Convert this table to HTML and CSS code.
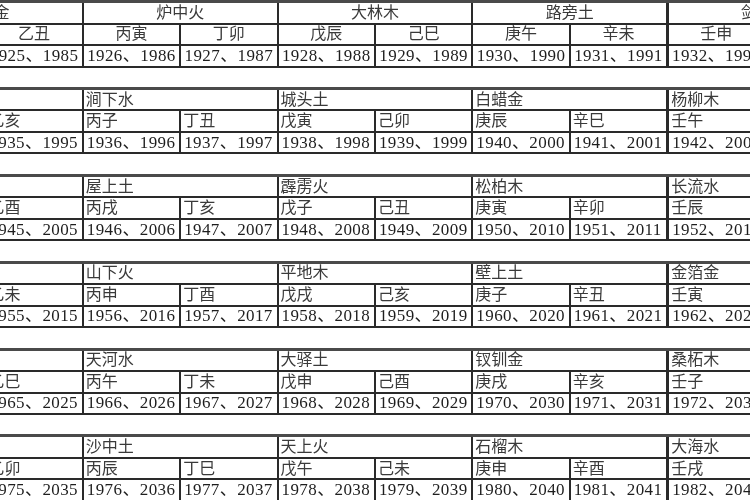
FILE: index.html
```html
<!DOCTYPE html>
<html lang="zh">
<head>
<meta charset="utf-8">
<title>六十甲子纳音表</title>
<link rel="stylesheet" href="styles.css">
</head>
<body>
<div class="sheet">
  <div class="block centered">
    <div class="c h">海中金</div><div class="c h">炉中火</div><div class="c h">大林木</div><div class="c h">路旁土</div><div class="c h k">剑锋金</div>
    <div class="c s">甲子</div><div class="c s">乙丑</div><div class="c s">丙寅</div><div class="c s">丁卯</div><div class="c s">戊辰</div><div class="c s">己巳</div><div class="c s">庚午</div><div class="c s">辛未</div><div class="c s k">壬申</div><div class="c s">癸酉</div>
    <div class="c y">1924、1984</div><div class="c y">1925、1985</div><div class="c y">1926、1986</div><div class="c y">1927、1987</div><div class="c y">1928、1988</div><div class="c y">1929、1989</div><div class="c y">1930、1990</div><div class="c y">1931、1991</div><div class="c y k">1932、1992</div><div class="c y">1933、1993</div>
  </div>
  <div class="block">
    <div class="c h">山头火</div><div class="c h">涧下水</div><div class="c h">城头土</div><div class="c h">白蜡金</div><div class="c h k">杨柳木</div>
    <div class="c s">甲戌</div><div class="c s">乙亥</div><div class="c s">丙子</div><div class="c s">丁丑</div><div class="c s">戊寅</div><div class="c s">己卯</div><div class="c s">庚辰</div><div class="c s">辛巳</div><div class="c s k">壬午</div><div class="c s">癸未</div>
    <div class="c y">1934、1994</div><div class="c y">1935、1995</div><div class="c y">1936、1996</div><div class="c y">1937、1997</div><div class="c y">1938、1998</div><div class="c y">1939、1999</div><div class="c y">1940、2000</div><div class="c y">1941、2001</div><div class="c y k">1942、2002</div><div class="c y">1943、2003</div>
  </div>
  <div class="block">
    <div class="c h">泉中水</div><div class="c h">屋上土</div><div class="c h">霹雳火</div><div class="c h">松柏木</div><div class="c h k">长流水</div>
    <div class="c s">甲申</div><div class="c s">乙酉</div><div class="c s">丙戌</div><div class="c s">丁亥</div><div class="c s">戊子</div><div class="c s">己丑</div><div class="c s">庚寅</div><div class="c s">辛卯</div><div class="c s k">壬辰</div><div class="c s">癸巳</div>
    <div class="c y">1944、2004</div><div class="c y">1945、2005</div><div class="c y">1946、2006</div><div class="c y">1947、2007</div><div class="c y">1948、2008</div><div class="c y">1949、2009</div><div class="c y">1950、2010</div><div class="c y">1951、2011</div><div class="c y k">1952、2012</div><div class="c y">1953、2013</div>
  </div>
  <div class="block">
    <div class="c h">沙中金</div><div class="c h">山下火</div><div class="c h">平地木</div><div class="c h">壁上土</div><div class="c h k">金箔金</div>
    <div class="c s">甲午</div><div class="c s">乙未</div><div class="c s">丙申</div><div class="c s">丁酉</div><div class="c s">戊戌</div><div class="c s">己亥</div><div class="c s">庚子</div><div class="c s">辛丑</div><div class="c s k">壬寅</div><div class="c s">癸卯</div>
    <div class="c y">1954、2014</div><div class="c y">1955、2015</div><div class="c y">1956、2016</div><div class="c y">1957、2017</div><div class="c y">1958、2018</div><div class="c y">1959、2019</div><div class="c y">1960、2020</div><div class="c y">1961、2021</div><div class="c y k">1962、2022</div><div class="c y">1963、2023</div>
  </div>
  <div class="block">
    <div class="c h">覆灯火</div><div class="c h">天河水</div><div class="c h">大驿土</div><div class="c h">钗钏金</div><div class="c h k">桑柘木</div>
    <div class="c s">甲辰</div><div class="c s">乙巳</div><div class="c s">丙午</div><div class="c s">丁未</div><div class="c s">戊申</div><div class="c s">己酉</div><div class="c s">庚戌</div><div class="c s">辛亥</div><div class="c s k">壬子</div><div class="c s">癸丑</div>
    <div class="c y">1964、2024</div><div class="c y">1965、2025</div><div class="c y">1966、2026</div><div class="c y">1967、2027</div><div class="c y">1968、2028</div><div class="c y">1969、2029</div><div class="c y">1970、2030</div><div class="c y">1971、2031</div><div class="c y k">1972、2032</div><div class="c y">1973、2033</div>
  </div>
  <div class="block">
    <div class="c h">大溪水</div><div class="c h">沙中土</div><div class="c h">天上火</div><div class="c h">石榴木</div><div class="c h k">大海水</div>
    <div class="c s">甲寅</div><div class="c s">乙卯</div><div class="c s">丙辰</div><div class="c s">丁巳</div><div class="c s">戊午</div><div class="c s">己未</div><div class="c s">庚申</div><div class="c s">辛酉</div><div class="c s k">壬戌</div><div class="c s">癸亥</div>
    <div class="c y">1974、2034</div><div class="c y">1975、2035</div><div class="c y">1976、2036</div><div class="c y">1977、2037</div><div class="c y">1978、2038</div><div class="c y">1979、2039</div><div class="c y">1980、2040</div><div class="c y">1981、2041</div><div class="c y k">1982、2042</div><div class="c y">1983、2043</div>
  </div>
</div>
</body>
</html>
```
FILE: styles.css
```css
html, body {
  margin: 0;
  padding: 0;
  background: #ffffff;
  overflow: hidden;
  width: 750px;
  height: 500px;
}

.sheet {
  margin-left: -113px;
  width: 974px;
  display: flex;
  flex-direction: column;
  gap: 19.4px;
  font-family: "Liberation Serif", "Noto Sans CJK SC", serif;
  color: #2b2b2b;
  filter: blur(0.35px);
}

.block {
  display: grid;
  grid-template-columns: repeat(10, 97.4px);
  grid-template-rows: repeat(3, 21.5px);
  border-top: 3px solid #4a4a4a;
}

.c {
  box-sizing: border-box;
  border-left: 2px solid #2a2a2a;
  border-bottom: 2px solid #2a2a2a;
  display: flex;
  align-items: center;
  padding-left: 2px;
  font-size: 16px;
  line-height: 18px;
  white-space: nowrap;
  overflow: hidden;
}

.c.k {
  border-left-width: 3px;
}

.h {
  grid-column: span 2;
  color: #3a3a3a;
}

.s {
  color: #3a3a3a;
}

.y {
  font-size: 17px;
  letter-spacing: 0.4px;
  padding-left: 3px;
  color: #1e1e1e;
}

.centered .c {
  justify-content: center;
  padding-left: 0;
}
```
